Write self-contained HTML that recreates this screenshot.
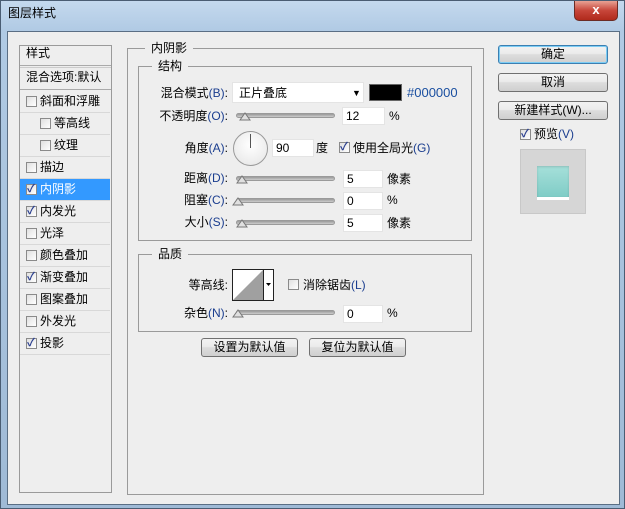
<!DOCTYPE html>
<html><head><meta charset="utf-8"><style>
*{box-sizing:border-box;margin:0;padding:0}
body{width:625px;height:509px;overflow:hidden;font-family:"Liberation Sans","Noto Sans CJK SC",sans-serif;font-size:12px;line-height:15px;color:#000;background:#6d8fb3}
.win{position:absolute;left:0;top:0;width:625px;height:509px;background:linear-gradient(180deg,#c4d9ee 0,#b0cae4 30px,#9fbad6 100%);border:1px solid #4a5d73}
.title{position:absolute;left:7px;top:5px;font-size:12px;color:#000}
.close{position:absolute;left:573px;top:0;width:44px;height:20px;background:linear-gradient(#e8a294,#c7463a 50%,#b02a1c);border:1px solid #6b2c25;border-top:none;border-radius:0 0 5px 5px;color:#fff;text-align:center;font-weight:bold;font-size:13px;line-height:18px}
.client{position:absolute;left:6px;top:30px;width:613px;height:474px;background:#eeeeee;border:1px solid #5a6e84}
.a{position:absolute}
.box{position:absolute;border:1px solid #9a9a9a}
.row{position:absolute;left:19px;width:90px;height:22px;border-bottom:1px solid #d8d8d8;line-height:21px}
.cb{position:absolute;width:11px;height:11px;border:1px solid #8a8a8a;background:linear-gradient(135deg,#e0e0e0,#fff)}
.cb.on::after{content:"✓";position:absolute;left:0;top:-3px;font-size:11px;line-height:15px;color:#2a3f8f;font-weight:bold}
.leg{position:absolute;background:#eeeeee;padding:0 6px}
.lbl{position:absolute;text-align:right;width:120px}
.lbl b{font-weight:normal;color:#1a3d8f}
.inp{position:absolute;height:18px;background:#fff;border:1px solid #e4e4e4;padding-left:3px;line-height:17px}
.sl{position:absolute;height:5px;border-radius:3px;background:linear-gradient(#999,#ccc);border:1px solid #9a9a9a}
.btn{position:absolute;height:19px;border:1px solid #707070;border-radius:3px;background:linear-gradient(#f2f2f2,#ebebeb 45%,#dddddd 50%,#cfcfcf);text-align:center;line-height:17px}
</style></head><body>
<div class="win">
<div class="title">图层样式</div>
<div class="close">x</div>
<div class="client"></div>

<div class="box" style="left:18px;top:44px;width:93px;height:448px"></div>
<div class="a" style="left:25px;top:45px">样式</div>
<div class="a" style="left:19px;top:64px;width:91px;border-top:1px solid #aaa;border-bottom:1px solid #ccc;height:3px"></div>
<div class="a" style="left:25px;top:69px">混合选项:默认</div>
<div class="a" style="left:19px;top:88px;width:91px;border-top:1px solid #aaa"></div>
<div class="row" style="top:90px"><span class="cb" style="left:6px;top:5px"></span><span class="a" style="left:20px">斜面和浮雕</span></div>
<div class="row" style="top:112px"><span class="cb" style="left:20px;top:5px"></span><span class="a" style="left:34px">等高线</span></div>
<div class="row" style="top:134px"><span class="cb" style="left:20px;top:5px"></span><span class="a" style="left:34px">纹理</span></div>
<div class="row" style="top:156px"><span class="cb" style="left:6px;top:5px"></span><span class="a" style="left:20px">描边</span></div>
<div class="row" style="top:178px;background:#3399ff;color:#fff"><span class="cb on" style="left:6px;top:5px"></span><span class="a" style="left:20px">内阴影</span></div>
<div class="row" style="top:200px"><span class="cb on" style="left:6px;top:5px"></span><span class="a" style="left:20px">内发光</span></div>
<div class="row" style="top:222px"><span class="cb" style="left:6px;top:5px"></span><span class="a" style="left:20px">光泽</span></div>
<div class="row" style="top:244px"><span class="cb" style="left:6px;top:5px"></span><span class="a" style="left:20px">颜色叠加</span></div>
<div class="row" style="top:266px"><span class="cb on" style="left:6px;top:5px"></span><span class="a" style="left:20px">渐变叠加</span></div>
<div class="row" style="top:288px"><span class="cb" style="left:6px;top:5px"></span><span class="a" style="left:20px">图案叠加</span></div>
<div class="row" style="top:310px"><span class="cb" style="left:6px;top:5px"></span><span class="a" style="left:20px">外发光</span></div>
<div class="row" style="top:332px"><span class="cb on" style="left:6px;top:5px"></span><span class="a" style="left:20px">投影</span></div>

<div class="box" style="left:126px;top:47px;width:357px;height:447px"></div>
<div class="leg" style="left:144px;top:40px">内阴影</div>
<div class="box" style="left:137px;top:65px;width:334px;height:175px"></div>
<div class="leg" style="left:151px;top:58px">结构</div>

<div class="lbl" style="left:107px;top:85px">混合模式<b>(B)</b>:</div>
<div class="inp" style="left:231px;top:81px;width:132px;height:21px;line-height:20px;padding-left:6px">正片叠底<span class="a" style="left:119px;top:0;font-size:9px">▼</span></div>
<div class="a" style="left:368px;top:83px;width:33px;height:17px;background:#000;border:1px solid #666"></div>
<div class="a" style="left:406px;top:84px;color:#1a4fa0;font-size:13px">#000000</div>

<div class="lbl" style="left:107px;top:108px">不透明度<b>(O)</b>:</div>
<div class="sl" style="left:235px;top:112px;width:99px"></div>
<svg class="a" style="left:238px;top:110px" width="12" height="10"><path d="M1 9 L6 2 L11 9Z" fill="#e0e0e0" stroke="#777"/></svg>
<div class="inp" style="left:341px;top:106px;width:43px">12</div>
<div class="a" style="left:388px;top:108px">%</div>

<div class="lbl" style="left:107px;top:140px">角度<b>(A)</b>:</div>
<div class="a" style="left:232px;top:130px;width:35px;height:35px;border-radius:50%;border:1px solid #999;background:radial-gradient(circle at 50% 40%,#fff,#e4e4e4)"></div>
<div class="a" style="left:249px;top:133px;width:1px;height:14px;background:#555"></div>
<div class="inp" style="left:271px;top:138px;width:42px">90</div>
<div class="a" style="left:315px;top:140px">度</div>
<span class="cb on" style="left:338px;top:141px"></span>
<div class="a" style="left:352px;top:140px">使用全局光<b style="font-weight:normal;color:#1a3d8f">(G)</b></div>

<div class="lbl" style="left:107px;top:170px">距离<b>(D)</b>:</div>
<div class="sl" style="left:235px;top:175px;width:99px"></div>
<svg class="a" style="left:235px;top:173px" width="12" height="10"><path d="M1 9 L6 2 L11 9Z" fill="#e0e0e0" stroke="#777"/></svg>
<div class="inp" style="left:342px;top:169px;width:40px">5</div>
<div class="a" style="left:386px;top:171px">像素</div>

<div class="lbl" style="left:107px;top:192px">阻塞<b>(C)</b>:</div>
<div class="sl" style="left:235px;top:197px;width:99px"></div>
<svg class="a" style="left:231px;top:195px" width="12" height="10"><path d="M1 9 L6 2 L11 9Z" fill="#e0e0e0" stroke="#777"/></svg>
<div class="inp" style="left:342px;top:191px;width:40px">0</div>
<div class="a" style="left:386px;top:192px">%</div>

<div class="lbl" style="left:107px;top:214px">大小<b>(S)</b>:</div>
<div class="sl" style="left:235px;top:219px;width:99px"></div>
<svg class="a" style="left:235px;top:217px" width="12" height="10"><path d="M1 9 L6 2 L11 9Z" fill="#e0e0e0" stroke="#777"/></svg>
<div class="inp" style="left:342px;top:213px;width:40px">5</div>
<div class="a" style="left:386px;top:215px">像素</div>

<div class="box" style="left:137px;top:253px;width:334px;height:78px"></div>
<div class="leg" style="left:151px;top:246px">品质</div>
<div class="lbl" style="left:107px;top:277px">等高线:</div>
<svg class="a" style="left:231px;top:268px" width="42" height="32"><rect x="0.5" y="0.5" width="41" height="31" fill="#fff" stroke="#222"/><path d="M1 31 L31 1 L31 31Z" fill="#a0a0a0"/><line x1="31.5" y1="1" x2="31.5" y2="31" stroke="#222"/><path d="M34 14 L39 14 L36.5 17Z" fill="#000"/></svg>
<span class="cb" style="left:287px;top:278px"></span>
<div class="a" style="left:302px;top:277px">消除锯齿<b style="font-weight:normal;color:#1a3d8f">(L)</b></div>
<div class="lbl" style="left:107px;top:305px">杂色<b>(N)</b>:</div>
<div class="sl" style="left:235px;top:309px;width:99px"></div>
<svg class="a" style="left:231px;top:307px" width="12" height="10"><path d="M1 9 L6 2 L11 9Z" fill="#e0e0e0" stroke="#777"/></svg>
<div class="inp" style="left:342px;top:304px;width:40px">0</div>
<div class="a" style="left:386px;top:305px">%</div>

<div class="btn" style="left:200px;top:337px;width:97px">设置为默认值</div>
<div class="btn" style="left:308px;top:337px;width:97px">复位为默认值</div>

<div class="btn" style="left:497px;top:44px;width:110px;border-color:#3c7fb1;box-shadow:inset 0 0 0 1px #7ccdf5">确定</div>
<div class="btn" style="left:497px;top:72px;width:110px">取消</div>
<div class="btn" style="left:497px;top:100px;width:110px">新建样式(W)...</div>
<span class="cb on" style="left:519px;top:128px"></span>
<div class="a" style="left:533px;top:126px">预览<b style="font-weight:normal;color:#1a3d8f">(V)</b></div>
<div class="a" style="left:519px;top:148px;width:66px;height:65px;background:#d6d6d6;border:1px solid #c8c8c8"></div>
<div class="a" style="left:536px;top:165px;width:32px;height:34px;background:#fff"></div>
<div class="a" style="left:536px;top:165px;width:32px;height:31px;background:linear-gradient(#a6e0da,#7fccc6);box-shadow:inset 0 1px 2px rgba(0,0,0,.15)"></div>
</div>
</body></html>
